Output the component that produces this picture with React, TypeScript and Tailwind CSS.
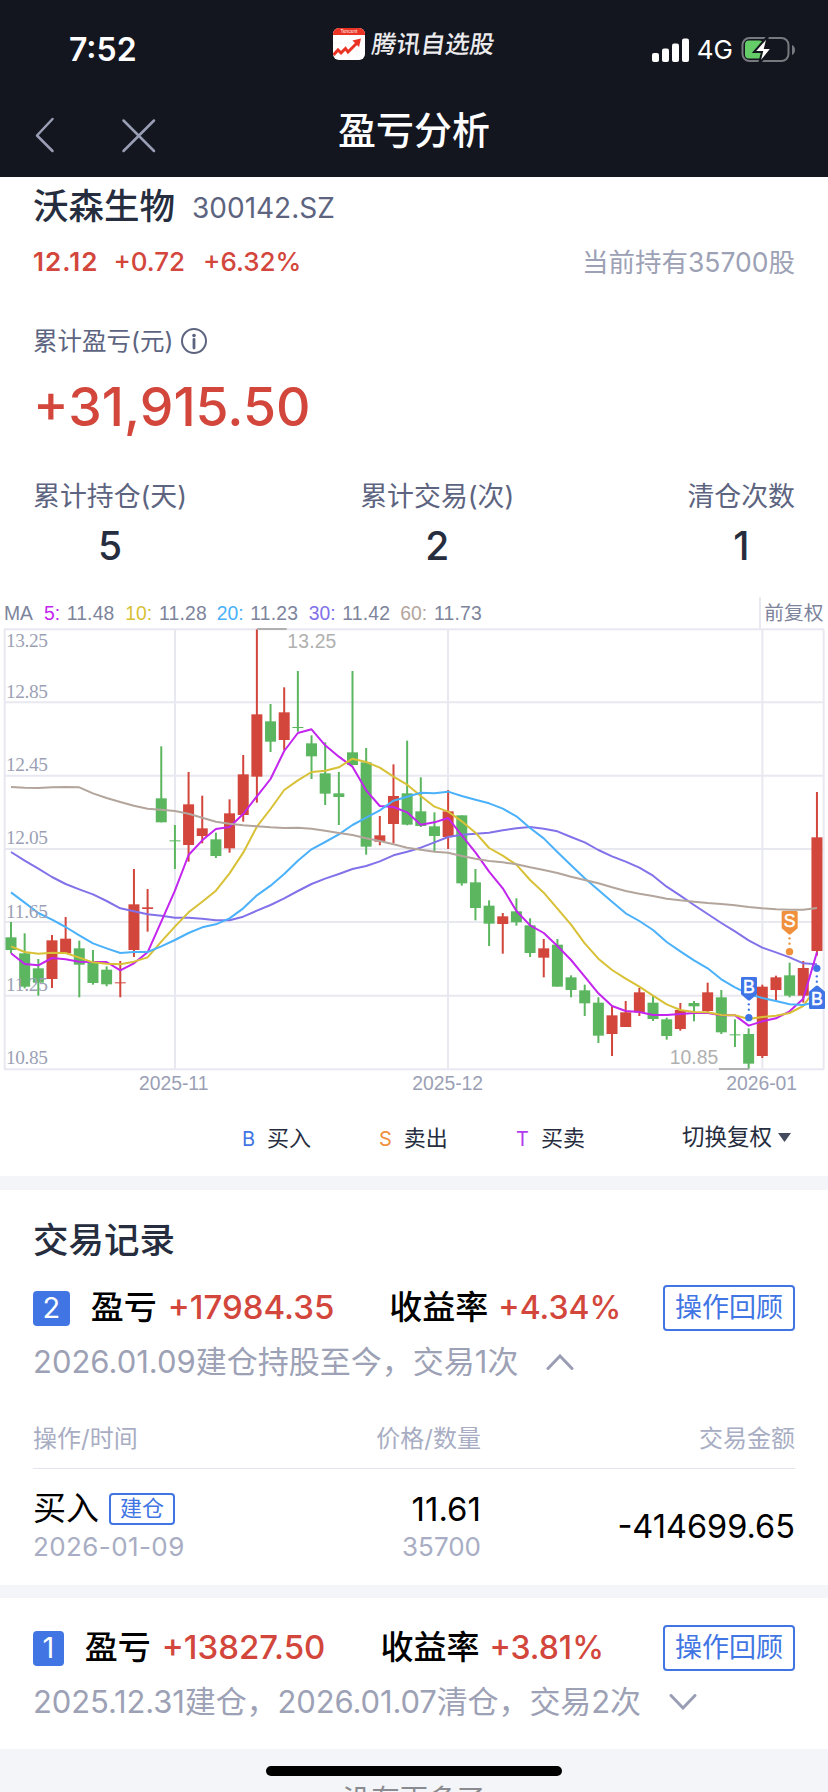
import type { ReactNode } from 'react';

type Candle = [up: 0 | 1, high: number, top: number, bottom: number, low: number];

const RED = '#d2463c';
const GREEN = '#5cb660';

// The chart is drawn on a 2484 x 1500 canvas, three units per css pixel.
const candles: Candle[] = [
  [0, 996, 1042, 1080, 1090], [0, 1030, 1090, 1190, 1195], [0, 1107, 1135, 1178, 1217], [1, 1035, 1051, 1167, 1194],
  [1, 981, 1046, 1090, 1090], [0, 1052, 1075, 1124, 1222], [0, 1080, 1118, 1179, 1184], [0, 1129, 1139, 1183, 1189],
  [1, 1113, 1177, 1180, 1222], [1, 837, 943, 1080, 1101], [1, 897, 952, 957, 1025], [0, 469, 625, 697, 697],
  [0, 705, 751, 754, 837], [1, 546, 643, 765, 815], [1, 617, 715, 738, 760], [0, 728, 748, 798, 804],
  [1, 628, 670, 775, 788], [1, 495, 553, 675, 695], [1, 118, 373, 560, 638], [0, 342, 394, 455, 486],
  [1, 292, 367, 450, 480], [0, 243, 411, 414, 425], [0, 436, 460, 499, 567], [0, 457, 550, 611, 645],
  [0, 546, 610, 621, 705], [0, 243, 487, 525, 525], [0, 474, 517, 770, 794], [1, 678, 736, 755, 766],
  [1, 523, 618, 702, 760], [0, 452, 610, 704, 706], [0, 562, 664, 708, 711], [0, 667, 709, 738, 783],
  [1, 600, 664, 741, 777], [0, 676, 676, 880, 887], [0, 837, 877, 954, 991], [0, 931, 947, 1001, 1068],
  [1, 969, 979, 1002, 1091], [0, 925, 964, 997, 1007], [0, 985, 1006, 1089, 1101], [1, 1047, 1075, 1103, 1162],
  [0, 1047, 1064, 1190, 1190], [0, 1156, 1162, 1200, 1222], [0, 1184, 1201, 1240, 1278], [0, 1222, 1238, 1337, 1359],
  [1, 1245, 1276, 1332, 1398], [1, 1233, 1267, 1311, 1311], [1, 1194, 1207, 1267, 1278], [0, 1217, 1238, 1287, 1293],
  [0, 1283, 1288, 1338, 1349], [1, 1239, 1260, 1317, 1322], [0, 1233, 1239, 1249, 1294], [1, 1178, 1207, 1263, 1267],
  [0, 1200, 1222, 1327, 1332], [0, 1288, 1333, 1336, 1371], [0, 1315, 1332, 1421, 1437], [1, 1184, 1190, 1398, 1404],
  [1, 1157, 1162, 1200, 1232], [0, 1118, 1156, 1217, 1222], [1, 1113, 1134, 1217, 1238], [1, 606, 742, 1083, 1097],
];

const averages = [
  {
    color: '#8172ea',
    ys: [786, 812, 836, 861, 882, 898, 913, 933, 955, 964, 973, 977, 983, 983, 986, 991, 991, 980, 962, 945, 925, 903, 882, 866, 852, 837, 828, 814, 796, 785, 773, 757, 741, 734, 731, 728, 721, 715, 711, 716, 724, 741, 757, 780, 799, 815, 833, 857, 890, 917, 945, 972, 999, 1024, 1051, 1073, 1087, 1102, 1120, 1123],
  },
  {
    color: '#c324ee',
    ys: [1090, 1122, 1126, 1104, 1108, 1115, 1116, 1116, 1141, 1120, 1087, 995, 902, 795, 751, 717, 711, 672, 619, 567, 483, 429, 418, 466, 500, 530, 601, 648, 651, 667, 704, 697, 684, 736, 787, 845, 895, 963, 1006, 1029, 1068, 1110, 1160, 1210, 1248, 1263, 1266, 1275, 1275, 1272, 1269, 1269, 1276, 1276, 1307, 1294, 1285, 1264, 1226, 1087],
  },
  {
    color: '#d8c136',
    ys: [1069, 1086, 1091, 1088, 1089, 1103, 1117, 1121, 1123, 1115, 1102, 1055, 1010, 967, 935, 902, 850, 788, 710, 657, 600, 571, 546, 542, 532, 506, 516, 533, 560, 584, 618, 650, 665, 694, 728, 774, 797, 824, 870, 908, 956, 1004, 1060, 1106, 1140, 1166, 1190, 1217, 1243, 1260, 1266, 1267, 1275, 1276, 1287, 1281, 1277, 1269, 1248, 1190],
  },
  {
    color: '#4ab1fa',
    ys: [907, 938, 969, 989, 1011, 1036, 1060, 1075, 1089, 1086, 1086, 1069, 1050, 1029, 1012, 1003, 985, 955, 916, 887, 852, 812, 778, 756, 733, 705, 683, 661, 632, 620, 608, 610, 605, 618, 629, 640, 656, 679, 714, 745, 786, 826, 865, 900, 935, 970, 993, 1020, 1056, 1084, 1111, 1135, 1168, 1192, 1212, 1224, 1233, 1243, 1245, 1235],
  },
  {
    color: '#b3a59c',
    ys: [591, 593, 594, 592, 591, 592, 610, 624, 636, 647, 656, 659, 663, 671, 683, 695, 701, 706, 709, 712, 714, 713, 716, 722, 729, 735, 745, 753, 763, 773, 779, 785, 788, 798, 806, 813, 817, 823, 832, 840, 849, 860, 870, 880, 892, 903, 911, 918, 926, 931, 935, 939, 942, 946, 951, 955, 958, 959, 959, 954],
  },
];

const legend = [
  { x: 132, label: '5:', value: '11.48', color: '#c324ee' },
  { x: 376, label: '10:', value: '11.28', color: '#d8c136' },
  { x: 650, label: '20:', value: '11.23', color: '#4ab1fa' },
  { x: 926, label: '30:', value: '11.42', color: '#8172ea' },
  { x: 1201, label: '60:', value: '11.73', color: '#b3a59c' },
];

const priceLabels = [
  { y: 172, text: '13.25' },
  { y: 324, text: '12.85' },
  { y: 543, text: '12.45' },
  { y: 763, text: '12.05' },
  { y: 984, text: '11.65' },
  { y: 1203, text: '11.25' },
  { y: 1423, text: '10.85' },
];

const cx = (i: number) => 33 + i * 40.98;

// Flag with a dotted leader to the traded price; flip puts the flag under the dot.
function TradeMark({ x, y, color, label, flip }: { x: number; y: number; color: string; label: string; flip?: boolean }) {
  return (
    <g transform={`translate(${x} ${y})`} fill={color}>
      <g transform={flip ? 'scale(1 -1)' : undefined}>
        <path d="M-20 0H20Q24 0 24 4V52L4 69Q0 72 -4 69L-24 52V4Q-24 0 -20 0Z" />
        <circle cx="-0.5" cy="82" r="3.5" />
        <circle cx="-0.5" cy="98" r="3.5" />
        <circle cx="-0.5" cy="122" r="11" />
      </g>
      <text y={flip ? -11 : 49} fontSize="53" fill="#fff" stroke="#fff" strokeWidth="1.5" textAnchor="middle">{label}</text>
    </g>
  );
}

function KLineChart() {
  return (
    <svg viewBox="0 0 2484 1500" className="block h-[500px] w-[828px] overflow-visible font-['Liberation_Sans',sans-serif]">
      <g stroke="#e8e8f0" strokeWidth="6" fill="none">
        {[118, 337, 557, 777, 996, 1217, 1438].map((y) => <path key={y} d={`M12 ${y}H2472`} />)}
        {[525, 1344, 2287].map((x) => <path key={x} d={`M${x} 118V1438`} />)}
        <path d="M14 118V1438M2471 118V1438M2280 22V118" />
      </g>

      {candles.map(([up, high, top, bottom, low], i) => (
        <g key={i} fill={up ? RED : GREEN}>
          <rect x={cx(i) - 3} y={high} width="6" height={low - high} />
          <rect x={cx(i) - 16.5} y={top} width="33" height={bottom - top} />
        </g>
      ))}

      {averages.map(({ color, ys }) => (
        <polyline
          key={color}
          points={ys.map((y, i) => `${cx(i)},${y}`).join(' ')}
          stroke={color}
          strokeWidth="6"
          strokeLinejoin="round"
          fill="none"
        />
      ))}

      <g fontSize="58" fill="#9b9fb5" className="font-['Liberation_Serif',serif]">
        {priceLabels.map(({ y, text }) => <text key={y} x="18" y={y} textLength="126">{text}</text>)}
      </g>

      <path d="M771 117H860M2157 1437H2247" stroke="#b0b0b0" strokeWidth="6" />
      <g fontSize="58" fill="#b0b0b0">
        <text x="862" y="174" textLength="147">13.25</text>
        <text x="2009" y="1421" textLength="146">10.85</text>
      </g>

      <g fontSize="58" fill="#7d849b">
        <text x="12" y="90">MA</text>
        {legend.map(({ x, label, value, color }) => (
          <g key={label}>
            <text x={x} y="90" fill={color}>{label}</text>
            <text x={x + (label.length === 2 ? 68 : 101)} y="90" textLength="143">{value}</text>
          </g>
        ))}
        <text x="2293" y="90" fontSize="59" className="font-['Noto_Sans_CJK_SC',sans-serif]">前复权</text>
      </g>

      <g fontSize="58" fill="#9b9fb5" textAnchor="middle">
        <text x="521" y="1501">2025-11</text>
        <text x="1343" y="1501">2025-12</text>
        <text x="2285" y="1501">2026-01</text>
      </g>

      <TradeMark x={2247} y={1161} color="#3f74e7" label="B" />
      <TradeMark x={2369} y={963} color="#f08f3c" label="S" />
      <TradeMark x={2451} y={1257} color="#3f74e7" label="B" flip />
    </svg>
  );
}

function StatusBar() {
  return (
    <div className="flex h-[90px] items-start justify-between pl-[69px] pr-[33px] text-white">
      <span className="mt-[30px] w-[214px] text-[32px] leading-[40px] font-semibold">7:52</span>
      <div className="mt-7 flex items-center gap-[7px]">
        <svg viewBox="0 0 32 32" className="size-8">
          <rect width="32" height="32" rx="6" fill="#fff" />
          <path d="M8 7V32M16 7V32M24 7V32M0 15H32M0 23H32" stroke="#f1f1f1" strokeWidth="0.500" />
          <path d="M0 7V6a6 6 0 0 1 6-6h20a6 6 0 0 1 6 6v1Z" fill="#ea3323" />
          <text x="16" y="5.200" fontSize="4.500" fill="#fff" textAnchor="middle">Tencent</text>
          <path d="M0.500 27L5 22l3 3 4.500-4.500 2.500 3.500L24 15" stroke="#ea3323" strokeWidth="3" fill="none" />
          <path d="M19.500 12.500l8.500-2-2 8.500Z" fill="#ea3323" />
        </svg>
        <span className="-skew-x-8 text-[24.5px] leading-8 font-medium text-[#ececee]">腾讯自选股</span>
      </div>
      <div className="mt-[30px] flex w-[250px] items-center justify-end">
        <svg viewBox="0 0 38 24" className="h-6 w-[38px]" fill="#fff">
          <rect x="0" y="15" width="7" height="9" rx="2" />
          <rect x="10" y="10.500" width="7" height="13.500" rx="2" />
          <rect x="20" y="5.500" width="7" height="18.500" rx="2" />
          <rect x="30" y="0.500" width="7" height="23.500" rx="2" />
        </svg>
        <span className="mr-2 ml-[7px] text-[26px] leading-[40px]">4G</span>
        <svg viewBox="0 0 54 28" className="h-7 w-[54px]">
          <rect x="1.500" y="2" width="46" height="23" rx="7" fill="none" stroke="#77797f" strokeWidth="2" />
          <path d="M51 9v10c2-.8 3-2.600 3-5s-1-4.200-3-5Z" fill="#77797f" />
          <rect x="4" y="4.500" width="18" height="18" rx="4" fill="#65cd67" />
          <path d="M27 0L13 16h8l-3 12 13-16h-7Z" fill="#fff" stroke="#14161f" strokeWidth="2" />
        </svg>
      </div>
    </div>
  );
}

function NavBar() {
  return (
    <div className="flex h-[87px] items-center">
      <div className="flex w-[276px] items-center pt-[2px]">
        <svg viewBox="0 0 130 40" className="ml-8 h-10 w-[130px]" fill="none" stroke="#9a9eb5" strokeWidth="2.500" strokeLinecap="round" strokeLinejoin="round">
          <path d="M20.500 4L5 20.500L20.500 36" />
          <path d="M91.500 5.500L122 36M122 5.500L91.500 36" />
        </svg>
      </div>
      <h1 className="w-[276px] pb-2 text-center text-[38px] leading-[50px] font-medium text-white">盈亏分析</h1>
    </div>
  );
}

function Stat({ label, value }: { label: string; value: string }) {
  return (
    <div className="text-center">
      <div className="text-[26.900px] leading-9 text-[#5d647f]">{label}</div>
      <div className="mt-2 text-[39px] leading-[48px] font-medium text-[#262d3e]">{value}</div>
    </div>
  );
}

function TradeSummary({ index, profit, rate, children }: { index: number; profit: string; rate: string; children: ReactNode }) {
  return (
    <>
      <div className="flex h-[46px] items-center whitespace-nowrap text-[33px] font-medium">
        <span className="flex h-[35px] items-center rounded bg-[#4175e4] px-[9.500px] text-[29px] font-normal text-white">{index}</span>
        <span className="ml-[21px] text-black">盈亏</span>
        <span className="ml-[11px] text-[33px] text-[#d2463c]">{profit}</span>
        <span className="ml-[55px] text-black">收益率</span>
        <span className="ml-2.5 text-[32px] text-[#d2463c]">{rate}</span>
        <button className="ml-auto h-[46px] w-[132px] rounded border-2 border-[#4175e4] text-[27px] leading-[40px] font-normal text-[#4175e4]">操作回顾</button>
      </div>
      <div className="mt-2 flex h-[46px] items-center whitespace-nowrap text-[31px] text-[#9da1b5]">{children}</div>
    </>
  );
}

export default function App() {
  return (
    <div className="flex h-[1792px] w-[828px] flex-col overflow-hidden bg-[#f4f5f9] font-['Inter','Noto_Sans_CJK_SC',sans-serif]">
      <header className="h-[177px] shrink-0 bg-[#14161f]">
        <StatusBar />
        <NavBar />
      </header>

      <section className="h-[999px] shrink-0 bg-white">
        <div className="h-[413px] px-[33px] pt-1.5">
          <div className="flex h-12 items-center leading-[48px]">
            <h2 className="text-[35.500px] font-medium text-[#262d3e]">沃森生物</h2>
            <span className="mt-0.5 ml-[17px] text-[28px] text-[#5d647f]">300142.SZ</span>
          </div>
          <div className="mt-[13px] flex items-center leading-9 text-[#d2463c]">
            <span className="text-[26px] font-semibold tracking-[1px]">12.12</span>
            <span className="ml-[15px] text-[26px] font-medium">+0.72</span>
            <span className="ml-[18px] text-[26px] font-medium">+6.32%</span>
            <span className="ml-auto text-[26.500px] text-[#9da1b5]">当前持有35700股</span>
          </div>
          <div className="mt-[43px] flex items-center text-[24.500px] leading-9 text-[#5d647f]">
            累计盈亏(元)
            <svg viewBox="0 0 26 26" className="ml-2 size-[26px]" fill="none" stroke="#5d647f" strokeWidth="2">
              <circle cx="13" cy="13" r="12" />
              <circle cx="13" cy="7.500" r="1.800" fill="#5d647f" stroke="none" />
              <path d="M13 11.500V20" strokeWidth="2.800" strokeLinecap="round" />
            </svg>
          </div>
          <div className="mt-4 text-[53.500px] leading-[64px] font-medium text-[#d2463c]">+31,915.50</div>
          <div className="mt-[39px] flex justify-between">
            <Stat label="累计持仓(天)" value="5" />
            <Stat label="累计交易(次)" value="2" />
            <Stat label="清仓次数" value="1" />
          </div>
        </div>

        <KLineChart />

        <div className="flex h-[86px] items-center pt-[30px] pb-5 pl-[242px] text-[22px] text-[#262d3e]">
          <span className="w-[137px]"><span className="mr-3 text-[20px] text-[#4175e4]">B</span>买入</span>
          <span className="w-[137px]"><span className="mr-3 text-[20px] text-[#f08f3c]">S</span>卖出</span>
          <span className="w-[166px]"><span className="mr-3 text-[20px] text-[#b23bee]">T</span>买卖</span>
          <span className="mb-0.5 flex items-center gap-1.5 text-[22.500px]">
            切换复权
            <svg viewBox="0 0 13 9" className="h-[9px] w-[13px]" fill="#454b5e"><path d="M0 0H13L6.500 9Z" /></svg>
          </span>
        </div>
      </section>

      <section className="mt-[14px] h-[395px] shrink-0 bg-white px-[33px] pt-[27px]">
        <h2 className="text-[35.500px] leading-[48px] font-medium text-[#262d3e]">交易记录</h2>
        <div className="mt-5">
          <TradeSummary index={2} profit="+17984.35" rate="+4.34%">
            2026.01.09建仓持股至今，交易1次
            <svg viewBox="0 0 28 16" className="ml-7 h-4 w-7" fill="none" stroke="#9a9eb5" strokeWidth="3" strokeLinecap="round">
              <path d="M2 14.500L14 2L26 14.500" />
            </svg>
          </TradeSummary>
        </div>
        <div className="mt-9 grid h-[48px] grid-cols-[1fr_1fr_314px] border-b border-[#e3e4ec] text-[24px] leading-[35px] text-[#a8adc3]">
          <span>操作/时间</span>
          <span className="text-right">价格/数量</span>
          <span className="text-right">交易金额</span>
        </div>
        <div className="mt-5 grid grid-cols-[1fr_1fr_314px] items-center text-black">
          <div>
            <div className="flex h-10 items-center text-[33px]">
              买入
              <span className="ml-2.5 h-8 w-[66px] rounded border-2 border-[#4175e4] text-center text-[22px] leading-[27px] text-[#4175e4]">建仓</span>
            </div>
            <div className="text-[26px] leading-9 tracking-[0.4px] text-[#a8adc3]">2026-01-09</div>
          </div>
          <div className="text-right">
            <div className="text-[33px] leading-10">11.61</div>
            <div className="text-[26px] leading-9 text-[#a8adc3]">35700</div>
          </div>
          <div className="text-right text-[32.500px]">-414699.65</div>
        </div>
      </section>

      <section className="mt-[13px] h-[151px] shrink-0 bg-white px-[33px] pt-[27px]">
        <TradeSummary index={1} profit="+13827.50" rate="+3.81%">
          <span className="tracking-[-0.12px]">2025.12.31建仓，2026.01.07清仓，交易2次</span>
          <svg viewBox="0 0 28 16" className="ml-7 h-4 w-7" fill="none" stroke="#9a9eb5" strokeWidth="3" strokeLinecap="round">
            <path d="M2 1.500L14 14L26 1.500" />
          </svg>
        </TradeSummary>
      </section>

      <footer className="flex flex-1 flex-col items-center pt-[17px]">
        <div className="h-2.5 w-[296px] shrink-0 rounded-full bg-black" />
        <p className="mt-[3px] shrink-0 text-[28.500px] leading-[42px] whitespace-nowrap text-[#8a8b90]">没有更多了</p>
      </footer>
    </div>
  );
}
